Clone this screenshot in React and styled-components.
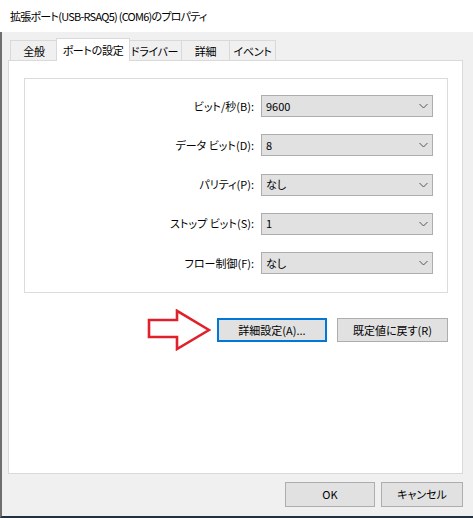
import styled, { createGlobalStyle } from 'styled-components'

const GlobalStyle = createGlobalStyle`
  * { box-sizing: border-box; }
  body {
    margin: 0;
    background: #f0f0f0;
    font-family: "Noto Sans CJK JP", "Noto Sans", sans-serif;
    font-feature-settings: "palt";
    font-size: 11px;
    color: #000;
  }
`

const Window = styled.div`
  width: 473px;
  height: 518px;
  display: flex;
  flex-direction: column;
`

const TitleBar = styled.div`
  height: 32px;
  background: #fff;
  display: flex;
  align-items: center;
  padding-left: 10px;
  font-size: 11px;
  letter-spacing: -0.75px;
  line-height: 1;
`

const Body = styled.div`
  flex: 1;
  display: flex;
  flex-direction: column;
  border-left: 2px solid #6e6e6e;
  border-bottom: 2px solid #23303f;
  padding: 6px 10px 9px 6px;
`

const TabStrip = styled.div`
  display: flex;
  align-items: flex-end;
  height: 22px;
  padding-left: 2px;
`

const Tab = styled.div`
  position: relative;
  width: ${p => p.$w}px;
  height: ${p => (p.$active ? 23 : 20)}px;
  margin-left: ${p => (p.$active ? -2 : -1)}px;
  margin-right: ${p => (p.$active ? -2 : 0)}px;
  margin-bottom: ${p => (p.$active ? -1 : 0)}px;
  z-index: ${p => (p.$active ? 1 : 0)};
  background: ${p => (p.$active ? '#fff' : '#f0f0f0')};
  border: 1px solid #d9d9d9;
  border-bottom: none;
  display: flex;
  align-items: center;
  justify-content: center;
  white-space: nowrap;
  letter-spacing: -0.3px;
  line-height: 1;
  padding-top: ${p => (p.$active ? 0 : 2)}px;

  &:first-child { margin-left: 0; }
`

const Panel = styled.div`
  flex: 1;
  background: #fff;
  border: 1px solid #d9d9d9;
  padding: 17px 14px 0 15px;
`

const GroupBox = styled.div`
  border: 1px solid #dcdcdc;
  padding: 16px 14px 18px 0;
  display: flex;
  flex-direction: column;
  gap: 17.25px;
`

const Row = styled.div`
  display: grid;
  grid-template-columns: 1fr 172px;
  column-gap: 7px;
  align-items: center;
`

const Label = styled.div`
  text-align: right;
  white-space: nowrap;
  line-height: 1;
`

const Combo = styled.div`
  height: 22px;
  background: #e1e1e1;
  border: 1px solid #adadad;
  display: flex;
  align-items: center;
  justify-content: space-between;
  padding: 0 4px 0 4px;
  line-height: 1;
`

const Chevron = () => (
  <svg width="9" height="6" viewBox="0 0 9 6">
    <path d="M0.5 1 L4.5 5 L8.5 1" fill="none" stroke="#555" strokeWidth="1" />
  </svg>
)

const ActionRow = styled.div`
  display: flex;
  justify-content: flex-end;
  align-items: center;
  margin-top: 16px;
  gap: 10px;
`

const Arrow = styled.svg`
  margin-right: -4px;
`

const Button = styled.button`
  width: ${p => p.$w}px;
  height: ${p => p.$h || 24}px;
  background: #e1e1e1;
  border: ${p => (p.$primary ? '2px solid #0078d7' : '1px solid #adadad')};
  font: inherit;
  color: #000;
  padding: 0;
  white-space: nowrap;
  line-height: 1;
`

const Footer = styled.div`
  display: flex;
  justify-content: flex-end;
  gap: 6px;
  margin-top: 8px;
`

const tabs = [
  { label: '全般', w: 48 },
  { label: 'ポートの設定', w: 74, active: true },
  { label: 'ドライバー', w: 55 },
  { label: '詳細', w: 49 },
  { label: 'イベント', w: 47 },
]

const settings = [
  { label: 'ビット/秒(B):', value: '9600' },
  { label: 'データ ビット(D):', value: '8' },
  { label: 'パリティ(P):', value: 'なし' },
  { label: 'ストップ ビット(S):', value: '1' },
  { label: 'フロー制御(F):', value: 'なし' },
]

export default function App() {
  return (
    <Window>
      <GlobalStyle />
      <TitleBar>拡張ポート(USB-RSAQ5) (COM6)のプロパティ</TitleBar>
      <Body>
        <TabStrip>
          {tabs.map(t => (
            <Tab key={t.label} $w={t.w} $active={t.active}>{t.label}</Tab>
          ))}
        </TabStrip>
        <Panel>
          <GroupBox>
            {settings.map(s => (
              <Row key={s.label}>
                <Label>{s.label}</Label>
                <Combo>
                  <span>{s.value}</span>
                  <Chevron />
                </Combo>
              </Row>
            ))}
          </GroupBox>
          <ActionRow>
            <Arrow width="64" height="42" viewBox="0 0 64 42">
              <polygon
                points="2,11 30,11 30,1.8 62,21 30,40 30,28 2,28"
                fill="none"
                stroke="#e0202a"
                strokeWidth="2.6"
                strokeLinejoin="miter"
              />
            </Arrow>
            <Button $w={110} $primary>詳細設定(A)...</Button>
            <Button $w={111}>既定値に戻す(R)</Button>
          </ActionRow>
        </Panel>
        <Footer>
          <Button $w={90} $h={25}>OK</Button>
          <Button $w={82} $h={25}>キャンセル</Button>
        </Footer>
      </Body>
    </Window>
  )
}
